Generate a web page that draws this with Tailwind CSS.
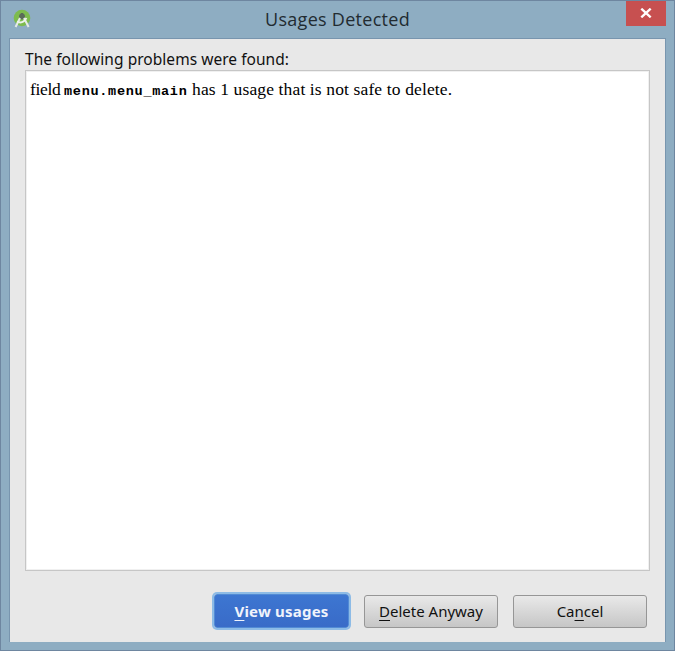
<!DOCTYPE html>
<html lang="en">
<head>
<meta charset="utf-8">
<title>Usages Detected</title>
<script src="https://cdn.jsdelivr.net/npm/@tailwindcss/browser@4"></script>
</head>
<body class="w-[675px] h-[651px] overflow-hidden font-['Noto_Sans','Open_Sans',sans-serif] text-[#111]">
<div class="w-[675px] h-[651px] flex flex-col bg-[#8eadc2] border border-[#6e86a0]">
  <header class="h-[37px] shrink-0 flex items-start">
    <svg class="w-[20px] h-[20px] ml-[11px] mt-[8px] shrink-0" viewBox="0 0 20 20">
      <circle cx="10" cy="9" r="8.3" fill="#7dbb4e"/>
      <path d="M10 4v3" stroke="#596459" stroke-width="2.4"/>
      <circle cx="10" cy="7.5" r="3" fill="#5b6b59"/>
      <path d="M8 9 3.6 18M12 9l4.6 9" stroke="#e6ebe6" stroke-width="2" fill="none"/>
      <path d="M5 12.5Q10.5 15.5 14.5 9" stroke="#edf1ed" stroke-width="1.8" fill="none"/>
    </svg>
    <h1 class="flex-1 pl-[17px] text-center whitespace-nowrap font-['Open_Sans',sans-serif] text-[18px] tracking-[0.28px] leading-[36px] text-[#222b31]"><span>Usages Detected</span></h1>
    <button class="w-[40px] h-[25px] mr-[8px] pb-[1px] bg-[#c75050] flex items-center justify-center" aria-label="Close">
      <svg class="w-[12px] h-[10px]" viewBox="0 0 12 10"><path d="M1.3 .7 10.7 9.3M10.7 .7 1.3 9.3" stroke="#fff" stroke-width="2.4"/></svg>
    </button>
  </header>
  <main class="mx-[8px] h-[604px] shrink-0 flex flex-col bg-[#e8e8e8] border border-b-0 border-[#7895ae] px-[15px]">
    <p class="mt-[9px] h-[22px] leading-[23px] text-[15.5px] tracking-[0.04px] whitespace-nowrap"><span>The following problems were found:</span></p>
    <section class="h-[501px] shrink-0 bg-white border border-[#c6c6c6] shadow-[inset_0_0_0_1px_#f0f0f0] pl-[4px] pt-[7px]">
      <p class="flex items-baseline whitespace-nowrap font-['Liberation_Serif',serif] text-[17.5px] leading-[22px] text-black">
        <span class="w-[34px] tracking-[-0.3px]">field</span>
        <b class="w-[128px] font-['Liberation_Mono',monospace] text-[13.5px] tracking-[0.72px]">menu.menu_main</b>
        <span class="tracking-[0.13px]">has 1 usage that is not safe to delete.</span>
      </p>
    </section>
    <footer class="mt-[23px] mr-[3px] flex justify-end items-center text-[15px]">
      <button class="w-[135px] h-[34px] mr-[15px] rounded-[3px] border border-[#528bd5] bg-linear-to-b from-[#3d76d1] to-[#396bc8] ring-2 ring-[#8dbbe6] text-[#f0f3fb] font-bold tracking-[0.2px]"><span><u class="underline-offset-3">V</u>iew usages</span></button>
      <button class="w-[134px] h-[33px] mr-[15px] rounded-[3px] border border-[#969696] bg-linear-to-b from-[#e9e9e9] to-[#c6c6c6] whitespace-nowrap"><span><u class="underline-offset-3">D</u>elete Anyway</span></button>
      <button class="w-[134px] h-[33px] rounded-[3px] border border-[#969696] bg-linear-to-b from-[#e9e9e9] to-[#c6c6c6]"><span>Ca<u class="underline-offset-3">n</u>cel</span></button>
    </footer>
  </main>
</div>
</body>
</html>
